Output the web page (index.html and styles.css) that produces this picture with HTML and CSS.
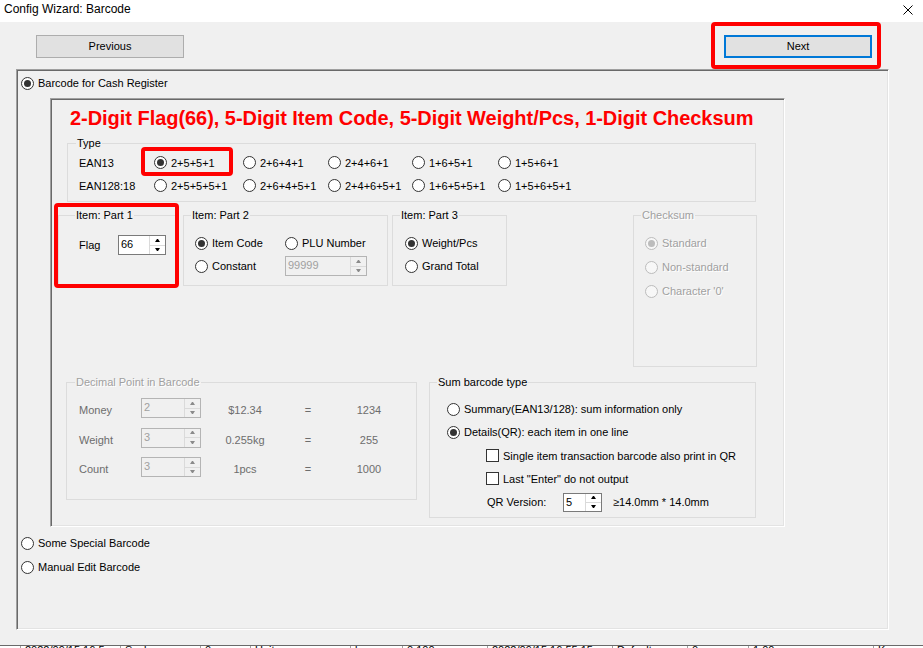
FILE: index.html
```html
<!DOCTYPE html>
<html>
<head>
<meta charset="utf-8">
<title>Config Wizard: Barcode</title>
<link rel="stylesheet" href="styles.css">
</head>
<body>
<div class="titlebar">
  <span class="title">Config Wizard: Barcode</span>
  <svg class="close" width="10" height="10" viewBox="0 0 10 10"><path d="M0.5 0.5L9.5 9.5M9.5 0.5L0.5 9.5" stroke="#000" stroke-width="1" fill="none"/></svg>
</div>

<div class="nav">
  <div class="btn">Previous</div>
  <div class="next-wrap">
    <div class="btn default">Next</div>
    <div class="mark mark-next"></div>
  </div>
</div>

<div class="outer">
  <div class="line first"><span class="rb on"></span>Barcode for Cash Register</div>

  <div class="inner">
    <div class="headline">2-Digit Flag(66), 5-Digit Item Code, 5-Digit Weight/Pcs, 1-Digit Checksum</div>

    <div class="group type-group">
      <span class="legend">Type</span>
      <div class="trow">
        <span>EAN13</span>
        <span class="opt"><span class="rb on"></span>2+5+5+1</span>
        <span class="opt"><span class="rb"></span>2+6+4+1</span>
        <span class="opt"><span class="rb"></span>2+4+6+1</span>
        <span class="opt"><span class="rb"></span>1+6+5+1</span>
        <span class="opt"><span class="rb"></span>1+5+6+1</span>
      </div>
      <div class="trow">
        <span>EAN128:18</span>
        <span class="opt"><span class="rb"></span>2+5+5+5+1</span>
        <span class="opt"><span class="rb"></span>2+6+4+5+1</span>
        <span class="opt"><span class="rb"></span>2+4+6+5+1</span>
        <span class="opt"><span class="rb"></span>1+6+5+5+1</span>
        <span class="opt"><span class="rb"></span>1+5+6+5+1</span>
      </div>
      <div class="mark mark-type"></div>
    </div>

    <div class="parts">
      <div class="group part1">
        <span class="legend">Item: Part 1</span>
        <div class="flagrow">
          <span class="flaglbl">Flag</span>
          <div class="spin spin-flag"><span class="val">66</span><span class="arrows"><span class="arr up"></span><span class="arr dn"></span></span></div>
        </div>
        <div class="mark mark-part1"></div>
      </div>

      <div class="group part2">
        <span class="legend">Item: Part 2</span>
        <div class="p2grid">
          <span class="opt"><span class="rb on"></span>Item Code</span>
          <span class="opt"><span class="rb"></span>PLU Number</span>
          <span class="opt"><span class="rb"></span>Constant</span>
          <div class="spin dis spin-const"><span class="val">99999</span><span class="arrows"><span class="arr up"></span><span class="arr dn"></span></span></div>
        </div>
      </div>

      <div class="group part3">
        <span class="legend">Item: Part 3</span>
        <div class="col">
          <span class="opt"><span class="rb on"></span>Weight/Pcs</span>
          <span class="opt"><span class="rb"></span>Grand Total</span>
        </div>
      </div>

      <div class="group checksum dis">
        <span class="legend">Checksum</span>
        <div class="col col-ck">
          <span class="opt"><span class="rb on"></span>Standard</span>
          <span class="opt"><span class="rb"></span>Non-standard</span>
          <span class="opt"><span class="rb"></span>Character '0'</span>
        </div>
      </div>
    </div>

    <div class="row3">
      <div class="group decimal">
        <span class="legend dis">Decimal Point in Barcode</span>
        <div class="dec-grid">
          <span>Money</span>
          <div class="spin dis spin-dec"><span class="val">2</span><span class="arrows"><span class="arr up"></span><span class="arr dn"></span></span></div>
          <span class="c">$12.34</span><span class="c">=</span><span class="c">1234</span>
          <span>Weight</span>
          <div class="spin dis spin-dec"><span class="val">3</span><span class="arrows"><span class="arr up"></span><span class="arr dn"></span></span></div>
          <span class="c">0.255kg</span><span class="c">=</span><span class="c">255</span>
          <span>Count</span>
          <div class="spin dis spin-dec"><span class="val">3</span><span class="arrows"><span class="arr up"></span><span class="arr dn"></span></span></div>
          <span class="c">1pcs</span><span class="c">=</span><span class="c">1000</span>
        </div>
      </div>

      <div class="group sum">
        <span class="legend">Sum barcode type</span>
        <div class="sum-body">
          <span class="opt"><span class="rb"></span>Summary(EAN13/128): sum information only</span>
          <span class="opt"><span class="rb on"></span>Details(QR): each item in one line</span>
          <span class="opt chk"><span class="cb"></span>Single item transaction barcode also print in QR</span>
          <span class="opt chk"><span class="cb"></span>Last "Enter" do not output</span>
          <div class="qr">
            <span class="qrlbl">QR Version:</span>
            <div class="spin spin-qr"><span class="val">5</span><span class="arrows"><span class="arr up"></span><span class="arr dn"></span></span></div>
            <span class="qrsize">≥14.0mm * 14.0mm</span>
          </div>
        </div>
      </div>
    </div>
  </div>

  <div class="line special"><span class="rb"></span>Some Special Barcode</div>
  <div class="line manual"><span class="rb"></span>Manual Edit Barcode</div>
</div>

<div class="strip">
  <span class="cell w20"></span>
  <span class="cell w100">2022/09/15 16:5</span>
  <span class="cell w80">Scale</span>
  <span class="cell w50">0</span>
  <span class="cell w100">Unit</span>
  <span class="cell w52">kg</span>
  <span class="cell w85">0.100</span>
  <span class="cell w125">2022/09/15 16:55:15</span>
  <span class="cell w75">Default</span>
  <span class="cell w61">0</span>
  <span class="cell w125">1.00</span>
  <span class="cell w50">Kg</span>
</div>
</body>
</html>
```

FILE: styles.css
```css
* { box-sizing: border-box; }

body {
  margin: 0;
  width: 923px;
  height: 648px;
  overflow: hidden;
  background: #f0f0f0;
  font-family: "Liberation Sans", Arial, sans-serif;
  font-size: 11px;
  color: #000;
}

/* title bar */
.titlebar {
  height: 22px;
  background: #fff;
  display: flex;
  justify-content: space-between;
  align-items: flex-start;
  padding: 2px 10px 0 4px;
  font-size: 12px;
  line-height: 14px;
}
.close { margin-top: 3px; }

/* nav buttons */
.nav {
  display: flex;
  justify-content: space-between;
  padding: 13px 51px 0 36px;
}
.btn {
  width: 148px;
  height: 23px;
  background: #e1e1e1;
  border: 1px solid #adadad;
  display: flex;
  align-items: center;
  justify-content: center;
  padding-bottom: 2px;
}
.btn.default { border: 2px solid #0078d7; }
.next-wrap { position: relative; }

/* red annotation boxes */
.mark {
  position: absolute;
  border: 4px solid #ff0000;
  border-radius: 4px;
  z-index: 5;
}
.mark-next { left: -13px; top: -13px; width: 170px; height: 47px; }
.mark-type { left: 73px; top: 3px; width: 92px; height: 29px; }
.mark-part1 { left: -5px; top: -13px; width: 125px; height: 85px; }

/* 3D panels */
.outer, .inner {
  border: 1px solid;
  border-color: #a0a0a0 #ffffff #ffffff #a0a0a0;
  box-shadow: inset 1px 1px 0 #696969, inset -1px -1px 0 #e3e3e3;
  padding: 1px;
}
.outer {
  margin: 11px 0 0 16px;
  width: 873px;
  height: 561px;
}
.inner {
  margin: 8px 0 0 32px;
  width: 735px;
  height: 429px;
}

.line {
  display: flex;
  align-items: center;
  gap: 4px;
  height: 14px;
  line-height: 14px;
  margin-left: 3px;
  white-space: nowrap;
}
.line.first { margin-top: 5px; }
.line.special { margin-top: 9px; }
.line.manual { margin-top: 10px; }

/* radio / checkbox */
.rb {
  width: 13px;
  height: 13px;
  border: 1px solid #333;
  border-radius: 50%;
  background: #fff;
  flex: none;
  position: relative;
}
.rb.on::after {
  content: "";
  position: absolute;
  left: 2px;
  top: 2px;
  width: 7px;
  height: 7px;
  border-radius: 50%;
  background: #333;
}
.cb {
  width: 13px;
  height: 13px;
  border: 1px solid #333;
  background: #fff;
  flex: none;
}
.opt {
  display: inline-flex;
  align-items: center;
  gap: 4px;
  height: 20px;
  white-space: nowrap;
}

/* headline */
.headline {
  margin: 6px 0 0 18px;
  color: #ff0000;
  font-weight: bold;
  font-size: 20px;
  line-height: 24px;
  letter-spacing: -0.04px;
  white-space: nowrap;
}

/* group boxes */
.group {
  position: relative;
  border: 1px solid #dcdcdc;
  flex: none;
}
.legend {
  position: absolute;
  top: -8px;
  left: 7px;
  padding: 0 1px;
  background: #f0f0f0;
  line-height: 14px;
  white-space: nowrap;
}

.type-group {
  margin: 13px 0 0 15px;
  width: 689px;
  height: 59px;
  padding: 7px 0 0 11px;
}
.type-group .legend { left: 8px; }
.trow {
  display: grid;
  grid-template-columns: 75px 89px 85px 84px 86px auto;
  height: 23px;
  align-items: center;
}

.parts {
  display: flex;
  align-items: flex-start;
  margin: 13px 0 0 6px;
}
.part1 { width: 119px; height: 71px; padding: 19px 0 0 20px; }
.part1 .legend { left: 16px; }
.part2 { width: 205px; height: 71px; margin-left: 6px; padding: 17px 0 0 11px; }
.part3 { width: 115px; height: 71px; margin-left: 4px; padding: 17px 0 0 12px; }
.checksum { width: 124px; height: 152px; margin-left: 126px; padding: 17px 0 0 11px; }

.flagrow { display: flex; align-items: center; height: 20px; }
.flaglbl { width: 39px; }

.p2grid {
  display: grid;
  grid-template-columns: 90px 82px;
  grid-auto-rows: 20px;
  row-gap: 3px;
  align-items: center;
}
.col { display: flex; flex-direction: column; gap: 3px; }
.col-ck { gap: 4px; }

/* disabled look */
.dis { color: #a0a0a0; text-shadow: 1px 1px 0 #fff; }
.dis .rb { border-color: #bcbcbc; background: #f7f7f7; }
.dis .rb.on::after { background: #bcbcbc; }

/* spin boxes */
.spin {
  display: flex;
  height: 20px;
  border: 1px solid #7a7a7a;
  background: #fff;
  text-shadow: none;
}
.spin .val { flex: 1; padding-left: 2px; line-height: 16px; }
.arrows {
  width: 16px;
  display: flex;
  flex-direction: column;
  border-left: 1px solid #dadada;
}
.arr {
  flex: 1;
  display: flex;
  align-items: center;
  justify-content: center;
}
.arr + .arr { border-top: 1px solid #dadada; }
.arr.up::before {
  content: "";
  width: 1px;
  height: 0;
  border-left: 2px solid transparent;
  border-right: 2px solid transparent;
  border-bottom: 3px solid #000;
}
.arr.dn::before {
  content: "";
  width: 1px;
  height: 0;
  border-left: 2px solid transparent;
  border-right: 2px solid transparent;
  border-top: 3px solid #000;
}
.spin-flag { width: 48px; }
.spin.dis { border-color: #b4b4b4; background: #f0f0f0; color: #a0a0a0; }
.spin.dis .arr.up::before { border-bottom-color: #8a8a8a; }
.spin.dis .arr.dn::before { border-top-color: #8a8a8a; }
.spin-const { width: 82px; }

/* row 3 */
.row3 {
  display: flex;
  align-items: flex-start;
  margin: 15px 0 0 14px;
}
.decimal { width: 351px; height: 118px; }
.decimal .legend { left: 8px; }
.dec-grid {
  display: grid;
  grid-template-columns: 62px 60px 88px 38px 84px;
  grid-auto-rows: 20px;
  row-gap: 9.5px;
  padding: 17px 0 0 12px;
  align-items: center;
  color: #6d6d6d;
}
.dec-grid .c { text-align: center; }
.spin-dec { align-self: start; margin-top: -2px; color: #6d6d6d; }

.sum { width: 327px; height: 136px; margin-left: 12px; }
.sum-body {
  display: flex;
  flex-direction: column;
  gap: 3.3px;
  padding: 16px 0 0 17px;
}
.chk { padding-left: 39px; }
.qr { display: flex; align-items: center; height: 20px; padding-left: 40px; }
.qrlbl { width: 76px; }
.spin-qr { width: 39px; height: 19px; }
.qrsize { margin-left: 11px; }

/* strip of window behind */
.strip {
  margin-top: 15px;
  height: 3px;
  overflow: hidden;
  display: flex;
  background: #fff;
  border-top: 1px solid #6a6a6a;
}
.cell {
  flex: none;
  border-left: 1px solid #a0a0a0;
  padding-left: 4px;
  line-height: 13px;
  margin-top: -2px;
  white-space: nowrap;
  overflow: hidden;
}
.cell.w20 { width: 20px; border-left: 0; }
.w100 { width: 100px; }
.w80 { width: 80px; }
.w50 { width: 50px; }
.w52 { width: 52px; }
.w85 { width: 85px; }
.w125 { width: 125px; }
.w75 { width: 75px; }
.w61 { width: 61px; }
```
